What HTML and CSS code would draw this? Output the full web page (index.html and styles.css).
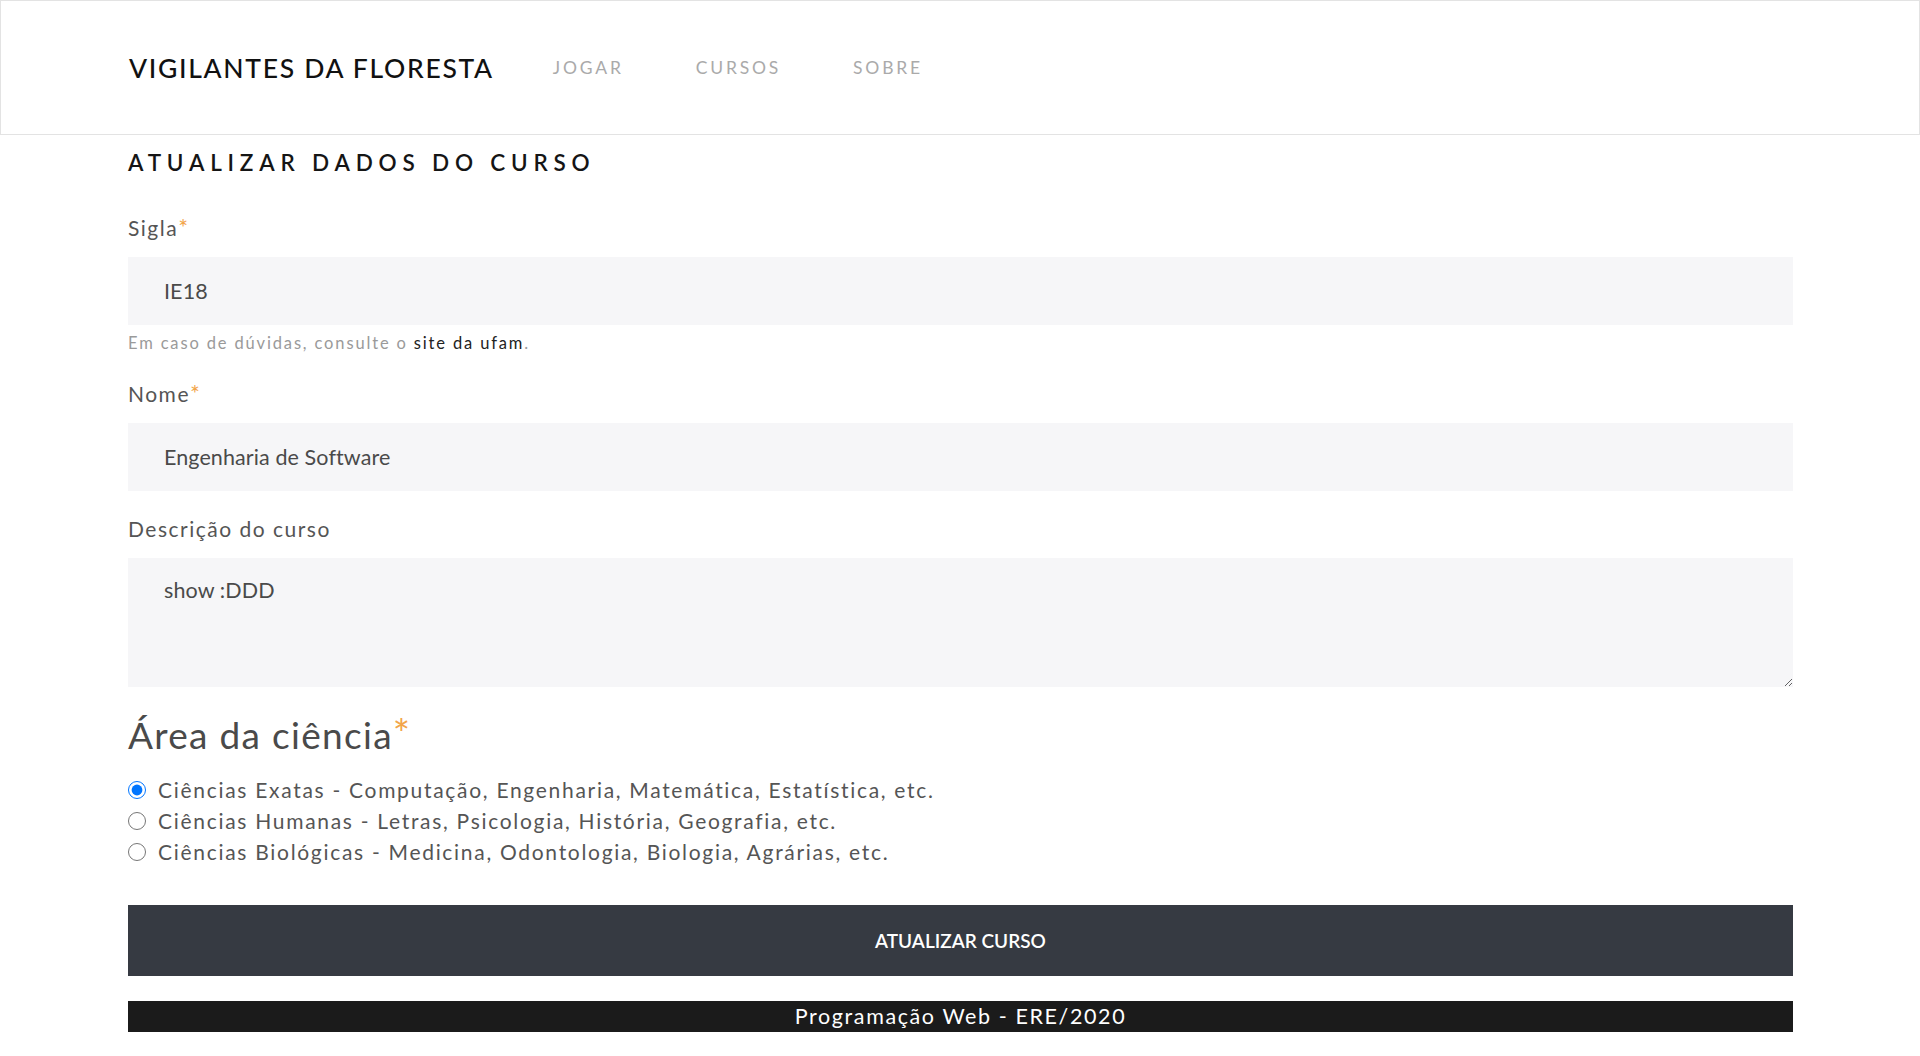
FILE: index.html
```html
<!DOCTYPE html>
<html lang="pt-BR">
<head>
<meta charset="utf-8">
<title>Vigilantes da Floresta - Atualizar curso</title>
<link rel="stylesheet" href="styles.css">
</head>
<body>
<header class="topbar">
  <a class="brand" href="#">VIGILANTES DA FLORESTA</a>
  <nav class="nav">
    <a href="#">JOGAR</a>
    <a href="#">CURSOS</a>
    <a href="#">SOBRE</a>
  </nav>
</header>
<main class="content">
  <h1 class="title">ATUALIZAR DADOS DO CURSO</h1>
  <form class="form">
    <label class="label" for="sigla">Sigla<span class="req">*</span></label>
    <input class="field" id="sigla" type="text" value="IE18">
    <p class="help">Em caso de dúvidas, consulte o <a href="#">site da ufam</a>.</p>

    <label class="label label-nome" for="nome">Nome<span class="req">*</span></label>
    <input class="field" id="nome" type="text" value="Engenharia de Software">

    <label class="label label-desc" for="desc">Descrição do curso</label>
    <textarea class="field area" id="desc">show :DDD</textarea>

    <h2 class="subtitle">Área da ciência<span class="req">*</span></h2>
    <div class="radios">
      <label class="radio"><input type="radio" name="area" checked> Ciências Exatas - Computação, Engenharia, Matemática, Estatística, etc.</label>
      <label class="radio"><input type="radio" name="area"> Ciências Humanas - Letras, Psicologia, História, Geografia, etc.</label>
      <label class="radio"><input type="radio" name="area"> Ciências Biológicas - Medicina, Odontologia, Biologia, Agrárias, etc.</label>
    </div>
    <button class="submit" type="button">ATUALIZAR CURSO</button>
  </form>
  <footer class="footer">Programação Web - ERE/2020</footer>
</main>
</body>
</html>
```

FILE: styles.css
```css
* { box-sizing: border-box; }
html, body { margin: 0; padding: 0; background: #fff; }
body {
  font-family: "Lato", "Noto Sans", "DejaVu Sans", sans-serif;
  color: #4f4f4f;
}

.topbar {
  height: 135px;
  border: 1px solid #e3e3e3;
  display: flex;
  align-items: center;
  padding: 0 0 0 128px;
}
.brand {
  font-size: 26.5px;
  letter-spacing: 1.7px;
  color: #111;
  text-decoration: none;
  font-weight: 500;
  margin-right: 52px;
}
.nav { display: flex; gap: 58px; }
.nav a {
  font-size: 17.5px;
  letter-spacing: 2.8px;
  color: #aaaaaa;
  text-decoration: none;
  padding: 0 7px;
}

.content { padding: 0 127px 0 128px; }
.title {
  margin: 13px 0 0;
  height: 30px;
  font-size: 22.5px;
  line-height: 30px;
  letter-spacing: 5.8px;
  font-weight: 600;
  color: #151515;
}
.form { display: flex; flex-direction: column; }
.label {
  margin-top: 38px;
  height: 24px;
  font-size: 21px;
  line-height: 24px;
  letter-spacing: 1.5px;
  color: #555;
}
.label-nome { margin-top: 29px; }
.label-desc { margin-top: 26px; }
.req { color: #f2a54a; font-size: 1.1em; line-height: 0; }
.field {
  margin-top: 17px;
  height: 68px;
  width: 100%;
  border: 0;
  background: #f6f6f8;
  padding: 0 36px;
  font-family: "Lato", "Noto Sans", sans-serif;
  font-size: 21.5px;
  letter-spacing: 0.1px;
  color: #4a4a4a;
  outline: none;
}
.area {
  height: 129px;
  padding-top: 19px;
  resize: vertical;
  line-height: 26px;
}
.help {
  margin: 8px 0 0;
  height: 20px;
  font-size: 16.5px;
  line-height: 20px;
  letter-spacing: 1.85px;
  color: #9a9a9a;
}
.help a { color: #222; text-decoration: none; }

.subtitle {
  margin: 28px 0 0;
  height: 40px;
  font-size: 37px;
  line-height: 40px;
  font-weight: 400;
  letter-spacing: 1.3px;
  color: #4a4a4a;
}
.radios { margin-top: 19px; display: flex; flex-direction: column; }
.radio {
  height: 31px;
  font-size: 21px;
  line-height: 31px;
  letter-spacing: 1.7px;
  color: #555;
  display: flex;
  align-items: center;
  white-space: pre;
}
.radio input {
  margin: 1px 5px 0 0;
  width: 18px;
  height: 18px;
}
.submit {
  margin-top: 38px;
  height: 71px;
  width: 100%;
  border: 0;
  background: #363a42;
  color: #fff;
  font-family: "Lato", "Noto Sans", sans-serif;
  font-size: 19px;
  font-weight: 600;
}
.footer {
  margin-top: 25px;
  height: 31px;
  background: #1b1b1b;
  color: #fff;
  text-align: center;
  font-size: 21.5px;
  line-height: 31px;
  letter-spacing: 1.6px;
}
```
